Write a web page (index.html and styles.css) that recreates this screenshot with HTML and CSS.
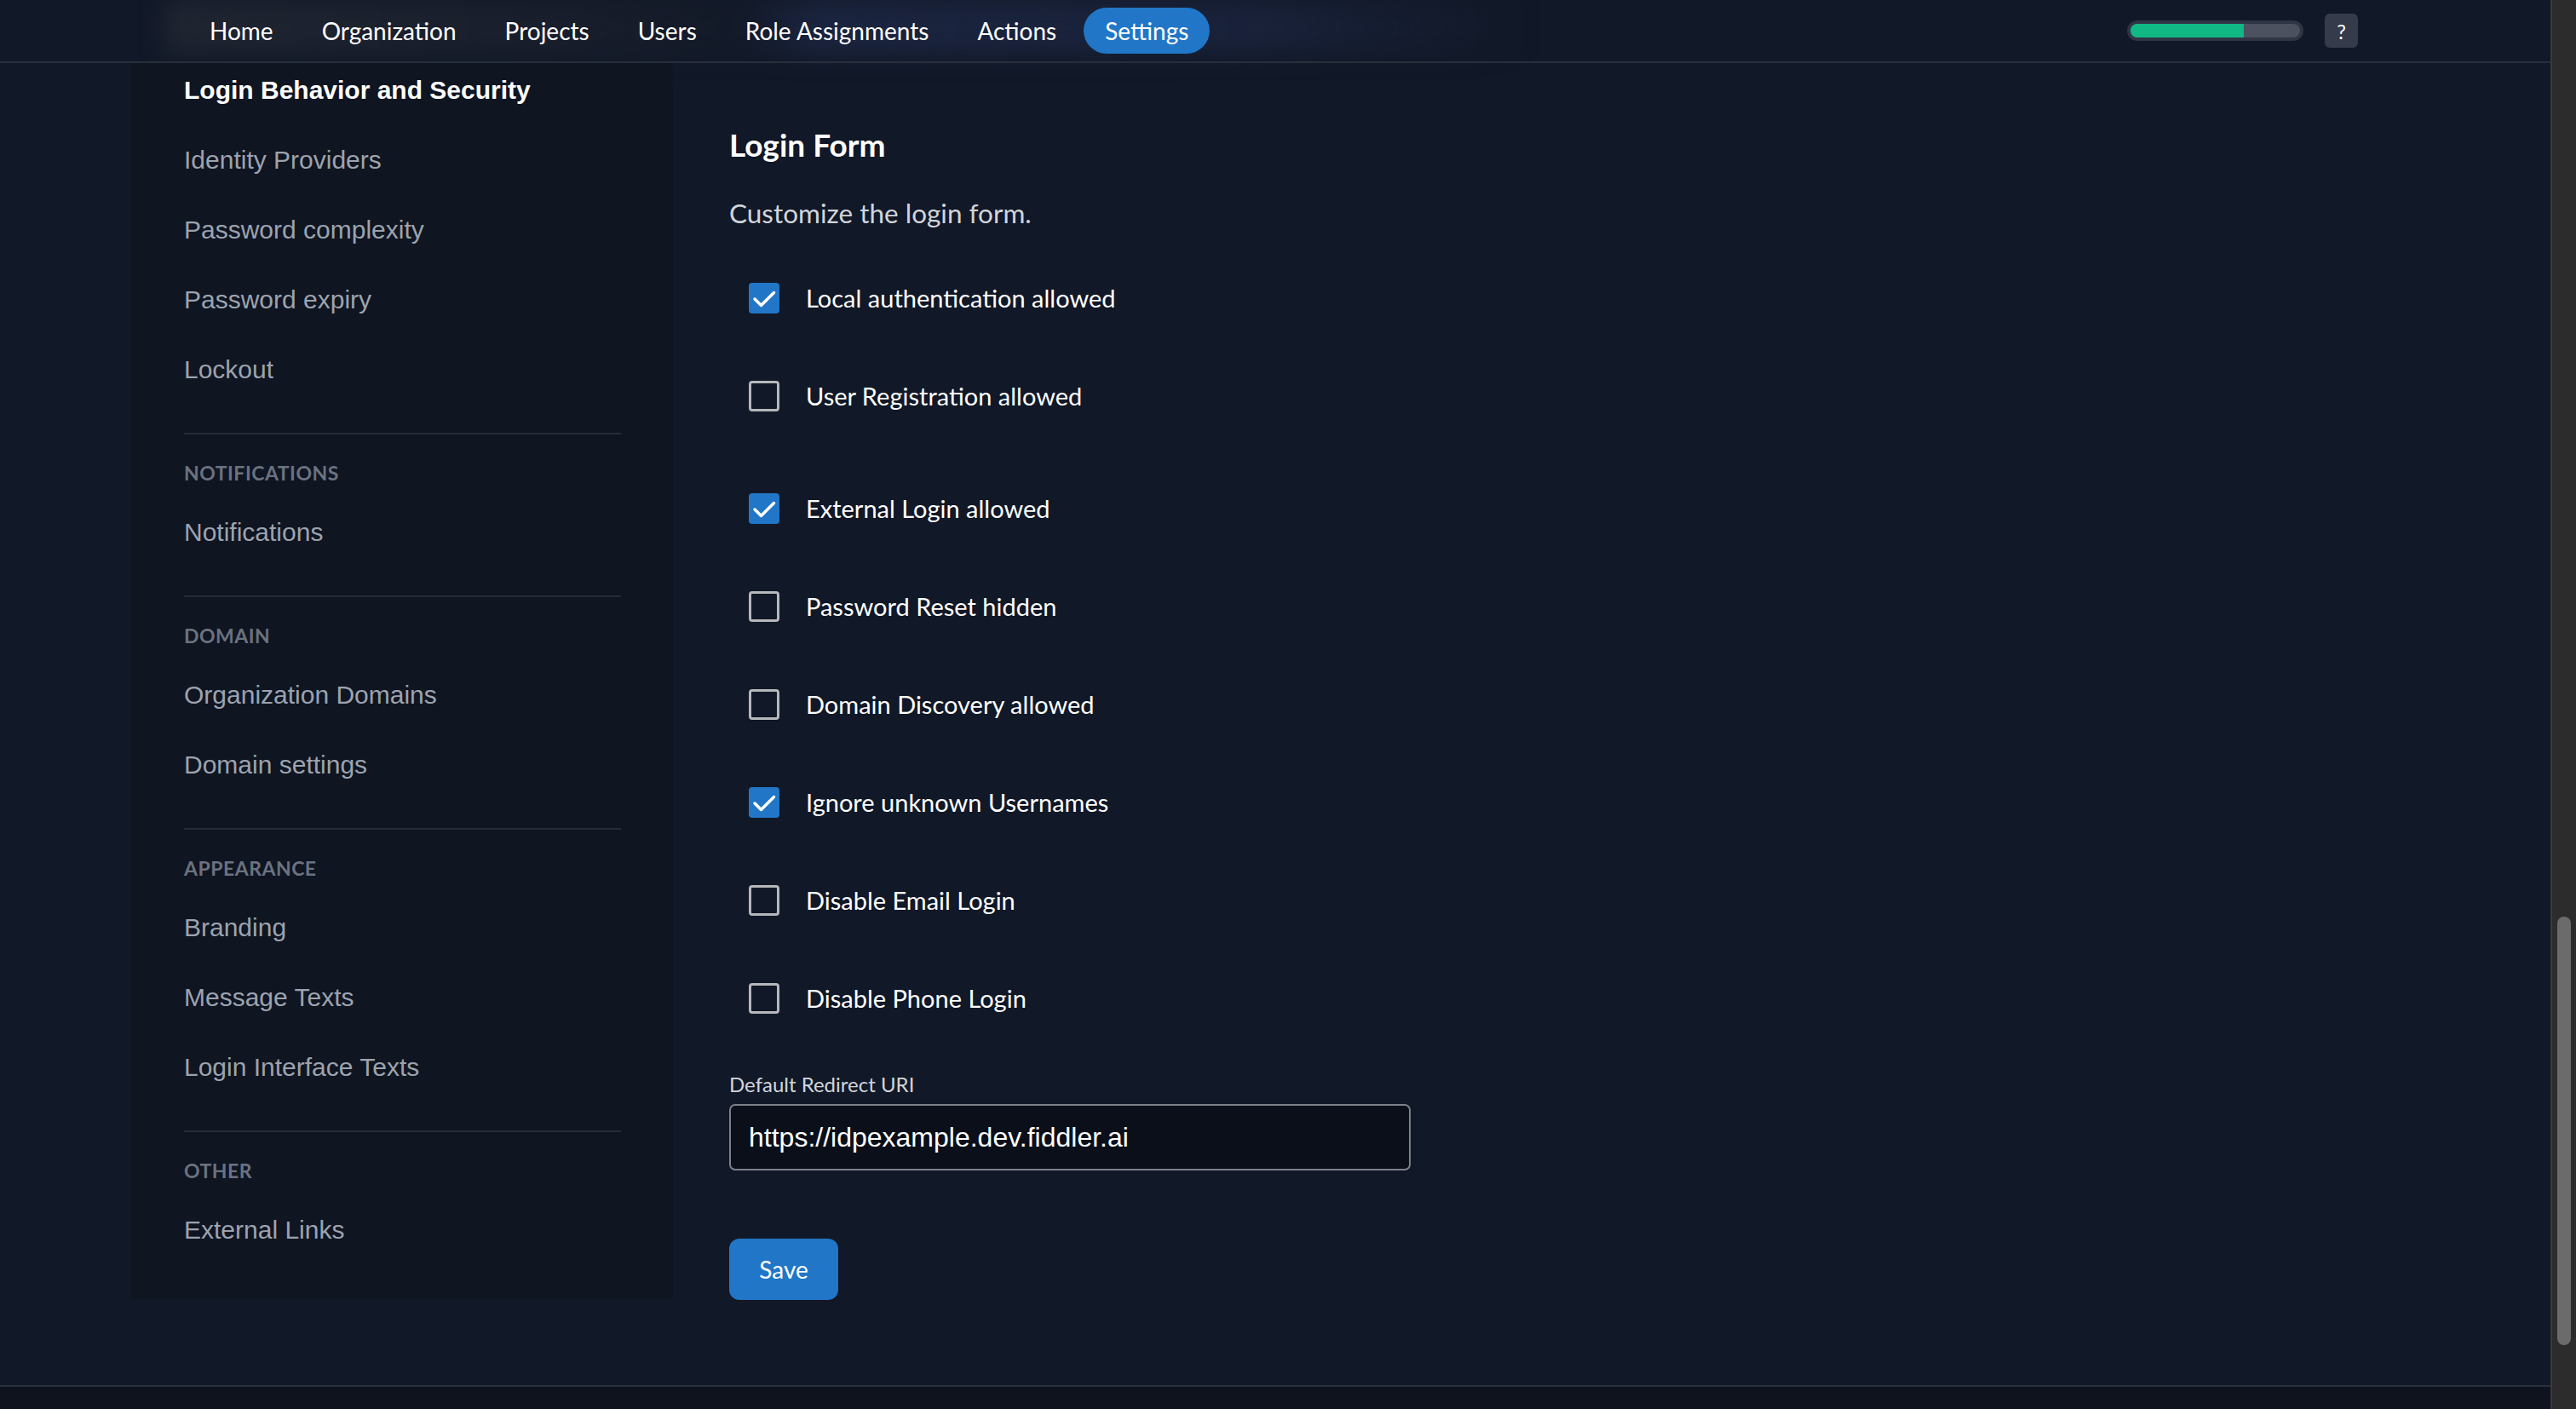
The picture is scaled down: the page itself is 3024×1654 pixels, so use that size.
FILE: index.html
```html
<!DOCTYPE html>
<html lang="en">
<head>
  <meta charset="UTF-8" />
  <meta name="viewport" content="width=device-width, initial-scale=1.0"/>
  <title>Settings - Login Form</title>
  <link rel="stylesheet" href="styles.css">
</head>
<body>
  <div class="viewport">
    <header class="topbar">
      <nav class="nav">
        <a class="nav-link" href="#">Home</a>
        <a class="nav-link" href="#">Organization</a>
        <a class="nav-link" href="#">Projects</a>
        <a class="nav-link" href="#">Users</a>
        <a class="nav-link" href="#">Role Assignments</a>
        <a class="nav-link" href="#">Actions</a>
        <a class="nav-link active" href="#">Settings</a>
      </nav>
      <div class="topbar-right">
        <div class="progress">
          <div class="progress-track">
            <div class="progress-fill" style="width: 67%;"></div>
          </div>
        </div>
        <button class="help-btn" type="button">?</button>
      </div>
    </header>

    <div class="content">
      <aside class="sidenav">
        <div class="side-title">Login Behavior and Security</div>
        <a class="side-link" href="#">Identity Providers</a>
        <a class="side-link" href="#">Password complexity</a>
        <a class="side-link" href="#">Password expiry</a>
        <a class="side-link" href="#">Lockout</a>

        <div class="side-divider"></div>
        <div class="side-heading">Notifications</div>
        <a class="side-link" href="#">Notifications</a>

        <div class="side-divider"></div>
        <div class="side-heading">Domain</div>
        <a class="side-link" href="#">Organization Domains</a>
        <a class="side-link" href="#">Domain settings</a>

        <div class="side-divider"></div>
        <div class="side-heading">Appearance</div>
        <a class="side-link" href="#">Branding</a>
        <a class="side-link" href="#">Message Texts</a>
        <a class="side-link" href="#">Login Interface Texts</a>

        <div class="side-divider"></div>
        <div class="side-heading">Other</div>
        <a class="side-link" href="#">External Links</a>
      </aside>

      <main class="form-col">
        <h2 class="form-title">Login Form</h2>
        <p class="form-desc">Customize the login form.</p>

        <div class="options">
          <label class="option">
            <span class="checkbox checked">
              <svg viewBox="0 0 36 36"><path d="M7 19 L14.5 26.5 L29.5 11.5" /></svg>
            </span>
            Local authentication allowed
          </label>
          <label class="option option-spaced">
            <span class="checkbox"></span>
            User Registration allowed
          </label>
          <label class="option">
            <span class="checkbox checked">
              <svg viewBox="0 0 36 36"><path d="M7 19 L14.5 26.5 L29.5 11.5" /></svg>
            </span>
            External Login allowed
          </label>
          <label class="option">
            <span class="checkbox"></span>
            Password Reset hidden
          </label>
          <label class="option">
            <span class="checkbox"></span>
            Domain Discovery allowed
          </label>
          <label class="option">
            <span class="checkbox checked">
              <svg viewBox="0 0 36 36"><path d="M7 19 L14.5 26.5 L29.5 11.5" /></svg>
            </span>
            Ignore unknown Usernames
          </label>
          <label class="option">
            <span class="checkbox"></span>
            Disable Email Login
          </label>
          <label class="option">
            <span class="checkbox"></span>
            Disable Phone Login
          </label>
        </div>

        <div class="field-label">Default Redirect URI</div>
        <input class="text-input" type="text" value="https://idpexample.dev.fiddler.ai" />

        <button class="save-btn" type="button">Save</button>
      </main>
    </div>

    <footer class="bottombar"></footer>
  </div>

  <div class="scrollbar">
    <div class="scroll-thumb"></div>
  </div>
</body>
</html>
```

FILE: styles.css
```css
body {
  margin: 0;
  height: 100vh;
  overflow: hidden;
  display: flex;
  background: #111827;
  font-family: Lato, "Liberation Sans", sans-serif;
  color: #ffffff;
}

a {
  text-decoration: none;
}

.viewport {
  flex: 1;
  min-width: 0;
  display: flex;
  flex-direction: column;
}

/* top navigation */

.topbar {
  height: 72px;
  flex-shrink: 0;
  display: flex;
  align-items: center;
  justify-content: space-between;
  padding: 0 226px 0 193px;
  border-bottom: 2px solid #282e3b;
}

.nav {
  position: relative;
  width: 1600px;
  height: 72px;
  box-sizing: border-box;
  padding-left: 28px;
  display: flex;
  align-items: center;
  gap: 7px;
}

.nav::before {
  content: "";
  position: absolute;
  inset: 0 0 8px 0;
  z-index: -1;
  background: linear-gradient(90deg,
    rgba(44, 48, 58, 0.55) 0%,
    rgba(34, 38, 50, 0.45) 30%,
    rgba(22, 28, 42, 0.3) 42%,
    rgba(30, 40, 70, 0.8) 48%,
    rgba(30, 40, 70, 0.6) 80%,
    rgba(30, 40, 70, 0) 100%);
  filter: blur(14px);
}

.nav-link {
  height: 54px;
  line-height: 54px;
  padding: 0 25px;
  border-radius: 27px;
  font-size: 28px;
  color: #ffffff;
  white-space: nowrap;
}

.nav-link.active {
  background: #2176c7;
}

.topbar-right {
  display: flex;
  align-items: center;
  gap: 25px;
}

.progress {
  width: 207px;
  height: 24px;
  box-sizing: border-box;
  padding: 4px;
  border-radius: 12px;
  background: #2f3544;
}

.progress-track {
  height: 16px;
  border-radius: 8px;
  background: #4b515e;
  overflow: hidden;
}

.progress-fill {
  height: 100%;
  background: #12b884;
}

.help-btn {
  width: 39px;
  height: 40px;
  border: none;
  border-radius: 6px;
  background: #353b4a;
  color: #ffffff;
  font-family: Lato, sans-serif;
  font-size: 24px;
  padding: 0;
}

/* page body */

.content {
  flex: 1;
  display: flex;
  align-items: flex-start;
  gap: 66px;
}

.sidenav {
  width: 637px;
  margin-left: 153px;
  box-sizing: border-box;
  padding: 0 61px 40px 63px;
  background: #0f1521;
  font-family: "Liberation Sans", Arial, sans-serif;
}

.side-title {
  font-size: 30px;
  font-weight: bold;
  line-height: 34px;
  padding: 15px 0 24px;
  color: #ffffff;
}

.side-link {
  display: block;
  font-size: 30px;
  line-height: 34px;
  padding: 24px 0;
  color: #9ca3af;
}

.side-divider {
  height: 2px;
  margin-top: 33px;
  background: #262c3a;
}

.side-heading {
  margin: 32px 0 16px;
  font-family: Lato, sans-serif;
  font-weight: bold;
  font-size: 23px;
  line-height: 26px;
  text-transform: uppercase;
  letter-spacing: 0.5px;
  color: #6b7280;
}

/* login form */

.form-col {
  padding-top: 75px;
}

.form-title {
  margin: 0;
  font-size: 37px;
  line-height: 42px;
  font-weight: bold;
}

.form-desc {
  margin: 41px 0 0;
  font-size: 31.5px;
  line-height: 36px;
  color: #d1d5db;
}

.options {
  margin-top: 64px;
  display: flex;
  flex-direction: column;
  gap: 79px;
}

.option {
  display: flex;
  align-items: center;
  gap: 31px;
  height: 36px;
  padding-left: 23px;
  font-size: 29px;
  line-height: 36px;
  color: #ffffff;
}

.option-spaced {
  margin-bottom: 17px;
}

.checkbox {
  width: 36px;
  height: 36px;
  box-sizing: border-box;
  border: 3px solid #b5b7bb;
  border-radius: 4px;
  flex-shrink: 0;
}

.checkbox.checked {
  border: none;
  background: #2176c7;
}

.checkbox svg {
  display: block;
  width: 36px;
  height: 36px;
}

.checkbox path {
  fill: none;
  stroke: #ffffff;
  stroke-width: 3.5;
  stroke-linecap: round;
  stroke-linejoin: round;
}

.field-label {
  margin-top: 69px;
  font-size: 24px;
  line-height: 28px;
  color: #d1d5db;
}

.text-input {
  display: block;
  margin-top: 9px;
  width: 800px;
  height: 78px;
  box-sizing: border-box;
  padding: 0 21px;
  border: 2px solid #7d8088;
  border-radius: 7px;
  background: #0b0f1a;
  color: #ffffff;
  font-family: "Liberation Sans", Arial, sans-serif;
  font-size: 32px;
  outline: none;
}

.save-btn {
  display: block;
  margin-top: 80px;
  width: 128px;
  height: 72px;
  border: none;
  border-radius: 12px;
  background: #2176c7;
  color: #ffffff;
  font-family: Lato, sans-serif;
  font-size: 28px;
}

.bottombar {
  height: 26px;
  flex-shrink: 0;
  border-top: 2px solid #2a303e;
  background: #0e131e;
}

/* fake scrollbar */

.scrollbar {
  width: 30px;
  flex-shrink: 0;
  box-sizing: border-box;
  padding-left: 6px;
  border-left: 2px solid #3a3a3a;
  background: #2c2c2c;
}

.scroll-thumb {
  width: 16px;
  height: 503px;
  margin-top: 1076px;
  border-radius: 8px;
  background: #6b6b6b;
}
```
